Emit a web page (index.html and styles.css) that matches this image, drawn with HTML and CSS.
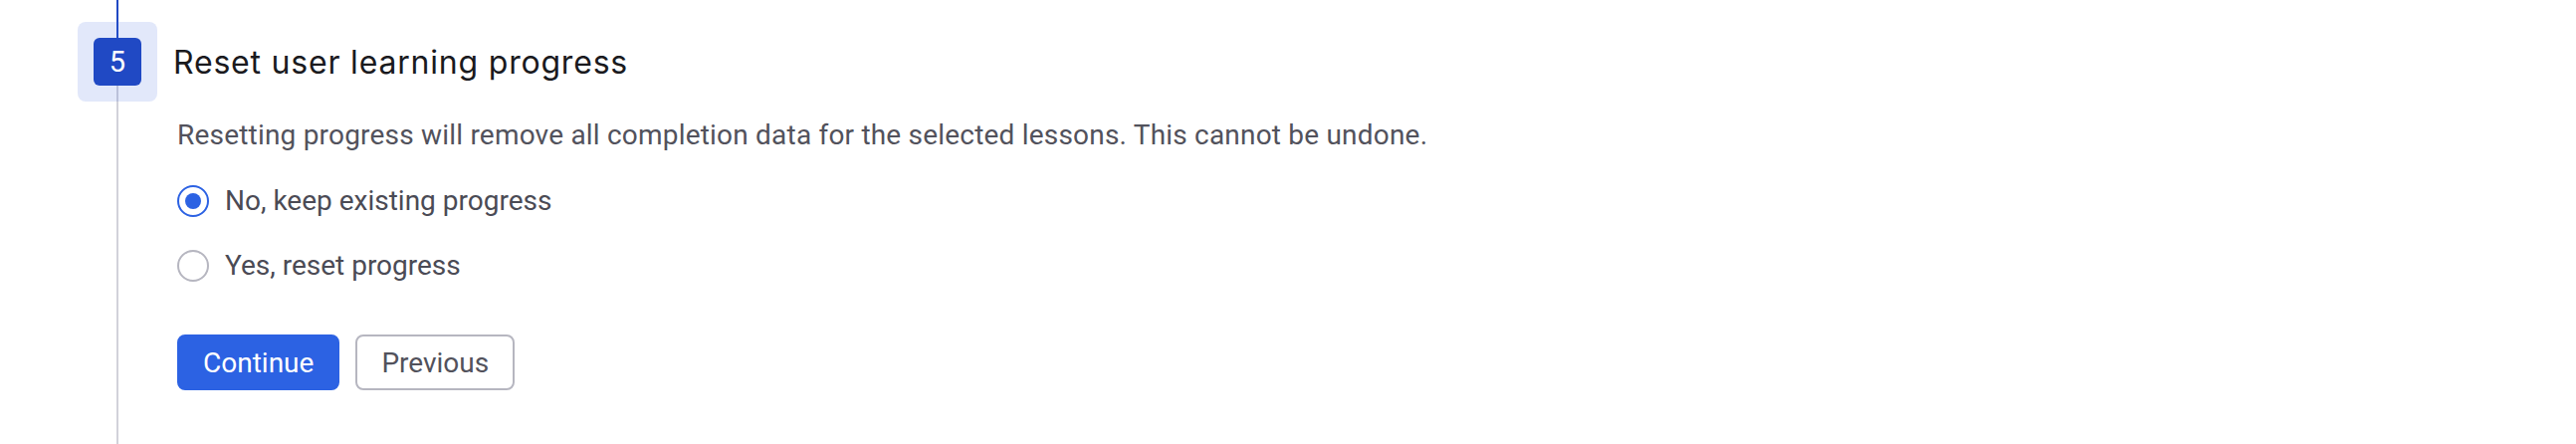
FILE: index.html
```html
<!DOCTYPE html>
<html lang="en">
<head>
<meta charset="utf-8">
<title>Reset user learning progress</title>
<link rel="stylesheet" href="styles.css">
</head>
<body>
<div class="stepper">
  <div class="step">
    <div class="rail">
      <div class="marker"><span class="num">5</span></div>
    </div>
    <div class="main">
      <h2 class="title">Reset user learning progress</h2>
      <div class="body">
        <p class="desc">Resetting progress will remove all completion data for the selected lessons. This cannot be undone.</p>
        <div class="options">
          <label class="option"><input class="radio" type="radio" name="reset" checked><span class="label">No, keep existing progress</span></label>
          <label class="option"><input class="radio" type="radio" name="reset"><span class="label">Yes, reset progress</span></label>
        </div>
        <div class="actions">
          <button class="btn btn-primary" type="button">Continue</button>
          <button class="btn btn-secondary" type="button">Previous</button>
        </div>
      </div>
    </div>
  </div>
</div>
</body>
</html>
```
FILE: styles.css
```css
html, body {
  margin: 0;
  padding: 0;
  background: #ffffff;
}
body {
  font-family: Roboto, "Liberation Sans", sans-serif;
}
.stepper {
  padding-left: 78px;
  min-height: 446px;
  display: flex;
}
.step {
  display: flex;
  min-height: 446px;
}
.rail {
  width: 80px;
  padding-top: 22px;
  box-sizing: border-box;
  background:
    linear-gradient(#2049c4, #2049c4) center top / 2px 62px no-repeat,
    linear-gradient(#d2d2da, #d2d2da) center 62px / 2px 100% no-repeat;
}
.marker {
  width: 80px;
  height: 80px;
  border-radius: 8px;
  background: rgba(59, 100, 220, 0.15);
  display: flex;
  align-items: center;
  justify-content: center;
}
.num {
  width: 48px;
  height: 48px;
  border-radius: 6px;
  background: #2049c4;
  color: #ffffff;
  font-size: 29px;
  display: flex;
  align-items: center;
  justify-content: center;
}
.main {
  padding-top: 22px;
  display: flex;
  flex-direction: column;
}
.title {
  margin: 0 0 0 16px;
  height: 80px;
  display: flex;
  align-items: center;
  font-family: Inter, "Noto Sans", sans-serif;
  font-weight: 400;
  font-size: 32px;
  letter-spacing: 0.8px;
  color: #1a1a1e;
}
.body {
  padding-left: 20px;
}
.desc {
  margin: 14px 0 0;
  font-size: 28px;
  line-height: 40px;
  letter-spacing: 0.2px;
  color: #52525c;
}
.options {
  margin-top: 26px;
  display: flex;
  flex-direction: column;
  gap: 25px;
}
.option {
  display: flex;
  align-items: center;
  gap: 16px;
  height: 40px;
  cursor: pointer;
}
.radio {
  appearance: none;
  -webkit-appearance: none;
  margin: 0;
  width: 32px;
  height: 32px;
  border-radius: 50%;
  border: 2px solid #b6b6c0;
  background: #ffffff;
  display: grid;
  place-items: center;
}
.radio:checked {
  border-color: #2c62e3;
}
.radio:checked::after {
  content: "";
  width: 16px;
  height: 16px;
  border-radius: 50%;
  background: #2c62e3;
}
.label {
  font-size: 28px;
  line-height: 40px;
  color: #4b4b55;
}
.actions {
  margin-top: 49px;
  display: flex;
  gap: 16px;
}
.btn {
  height: 56px;
  padding: 0 24px;
  border-radius: 8px;
  border: 2px solid transparent;
  font-family: Roboto, "Liberation Sans", sans-serif;
  font-size: 28px;
  cursor: pointer;
}
.btn-primary {
  background: #2c62e3;
  border-color: #2c62e3;
  color: #ffffff;
}
.btn-secondary {
  background: #ffffff;
  border-color: #b6b6c0;
  color: #52525c;
}
```
